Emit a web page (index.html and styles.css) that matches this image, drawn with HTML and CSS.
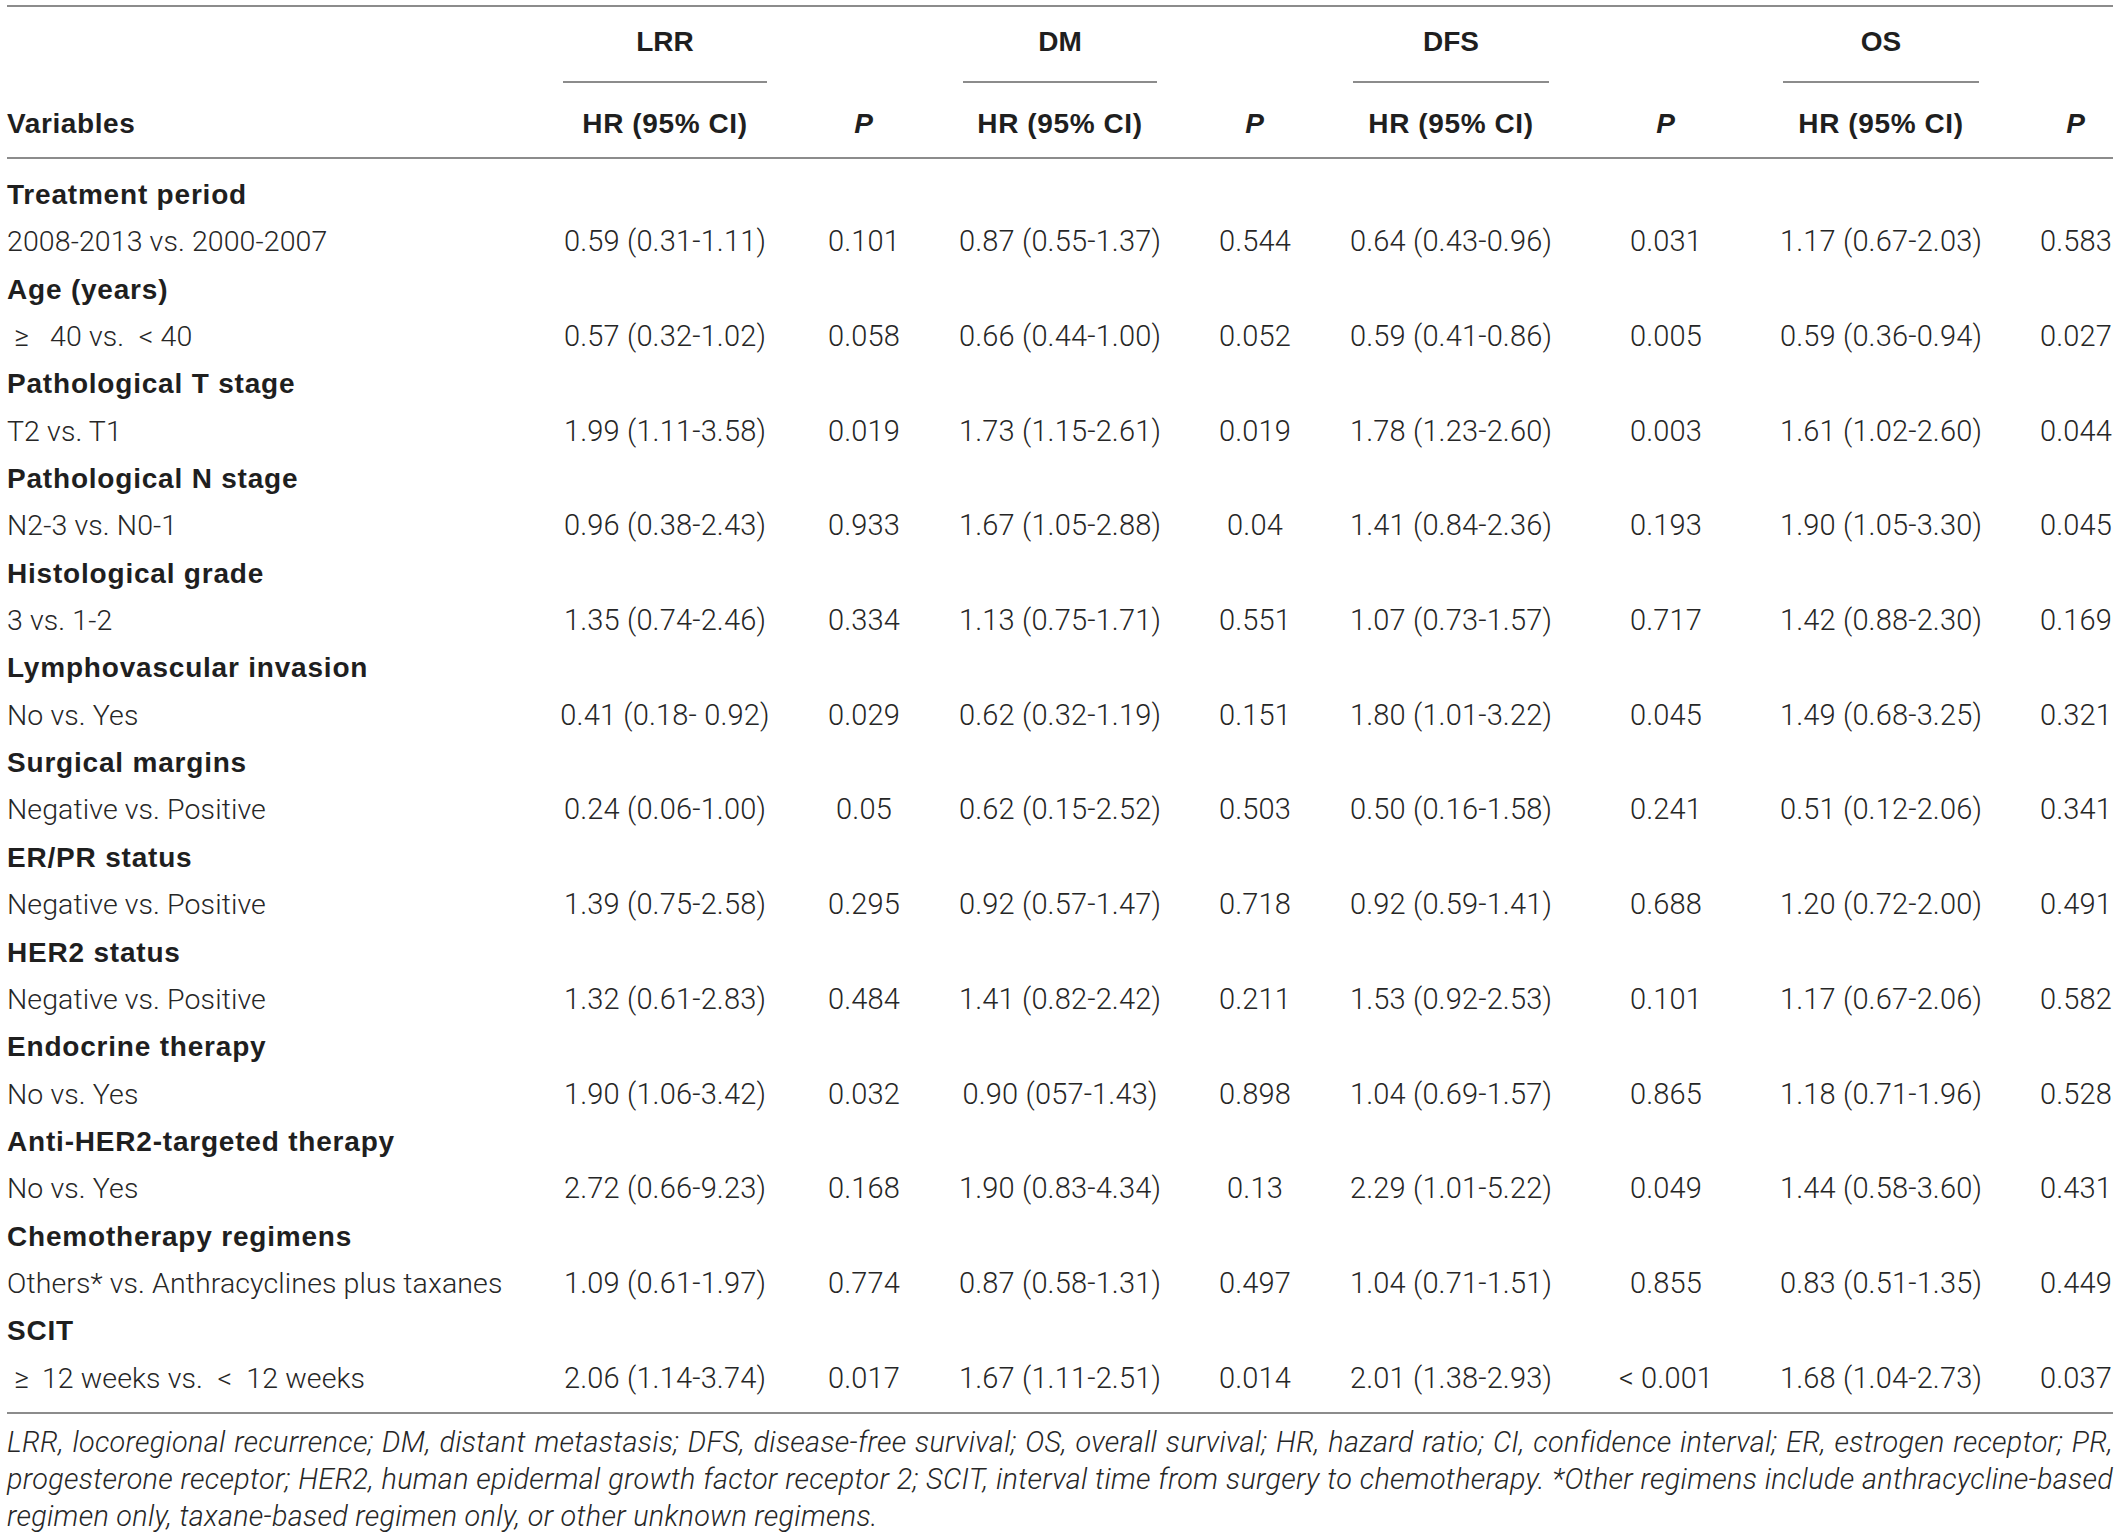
FILE: index.html
```html
<!DOCTYPE html>
<html lang="en">
<head>
<meta charset="utf-8">
<title>Multivariate analysis</title>
<link rel="stylesheet" href="styles.css">
</head>
<body>
<div class="page">
  <div class="tbl">
    <div class="row grp">
      <div></div>
      <div><div class="glabel first">LRR</div></div>
      <div></div>
      <div><div class="glabel">DM</div></div>
      <div></div>
      <div><div class="glabel">DFS</div></div>
      <div></div>
      <div><div class="glabel">OS</div></div>
      <div></div>
    </div>
    <div class="row head">
      <div class="l">Variables</div>
      <div>HR (95% CI)</div><div><i>P</i></div>
      <div>HR (95% CI)</div><div><i>P</i></div>
      <div>HR (95% CI)</div><div><i>P</i></div>
      <div>HR (95% CI)</div><div><i>P</i></div>
    </div>
    <div class="body">
      <div class="row cat"><div class="l">Treatment period</div></div>
      <div class="row"><div class="l">2008-2013 vs. 2000-2007</div><div>0.59 (0.31-1.11)</div><div>0.101</div><div>0.87 (0.55-1.37)</div><div>0.544</div><div>0.64 (0.43-0.96)</div><div>0.031</div><div>1.17 (0.67-2.03)</div><div>0.583</div></div>

      <div class="row cat"><div class="l">Age (years)</div></div>
      <div class="row"><div class="l">&nbsp;&ge;&nbsp;&nbsp; 40 vs.&ensp;&lt;&nbsp;40</div><div>0.57 (0.32-1.02)</div><div>0.058</div><div>0.66 (0.44-1.00)</div><div>0.052</div><div>0.59 (0.41-0.86)</div><div>0.005</div><div>0.59 (0.36-0.94)</div><div>0.027</div></div>

      <div class="row cat"><div class="l">Pathological T stage</div></div>
      <div class="row"><div class="l">T2 vs. T1</div><div>1.99 (1.11-3.58)</div><div>0.019</div><div>1.73 (1.15-2.61)</div><div>0.019</div><div>1.78 (1.23-2.60)</div><div>0.003</div><div>1.61 (1.02-2.60)</div><div>0.044</div></div>

      <div class="row cat"><div class="l">Pathological N stage</div></div>
      <div class="row"><div class="l">N2-3 vs. N0-1</div><div>0.96 (0.38-2.43)</div><div>0.933</div><div>1.67 (1.05-2.88)</div><div>0.04</div><div>1.41 (0.84-2.36)</div><div>0.193</div><div>1.90 (1.05-3.30)</div><div>0.045</div></div>

      <div class="row cat"><div class="l">Histological grade</div></div>
      <div class="row"><div class="l">3 vs. 1-2</div><div>1.35 (0.74-2.46)</div><div>0.334</div><div>1.13 (0.75-1.71)</div><div>0.551</div><div>1.07 (0.73-1.57)</div><div>0.717</div><div>1.42 (0.88-2.30)</div><div>0.169</div></div>

      <div class="row cat"><div class="l">Lymphovascular invasion</div></div>
      <div class="row"><div class="l">No vs. Yes</div><div>0.41 (0.18- 0.92)</div><div>0.029</div><div>0.62 (0.32-1.19)</div><div>0.151</div><div>1.80 (1.01-3.22)</div><div>0.045</div><div>1.49 (0.68-3.25)</div><div>0.321</div></div>

      <div class="row cat"><div class="l">Surgical margins</div></div>
      <div class="row"><div class="l">Negative vs. Positive</div><div>0.24 (0.06-1.00)</div><div>0.05</div><div>0.62 (0.15-2.52)</div><div>0.503</div><div>0.50 (0.16-1.58)</div><div>0.241</div><div>0.51 (0.12-2.06)</div><div>0.341</div></div>

      <div class="row cat"><div class="l">ER/PR status</div></div>
      <div class="row"><div class="l">Negative vs. Positive</div><div>1.39 (0.75-2.58)</div><div>0.295</div><div>0.92 (0.57-1.47)</div><div>0.718</div><div>0.92 (0.59-1.41)</div><div>0.688</div><div>1.20 (0.72-2.00)</div><div>0.491</div></div>

      <div class="row cat"><div class="l">HER2 status</div></div>
      <div class="row"><div class="l">Negative vs. Positive</div><div>1.32 (0.61-2.83)</div><div>0.484</div><div>1.41 (0.82-2.42)</div><div>0.211</div><div>1.53 (0.92-2.53)</div><div>0.101</div><div>1.17 (0.67-2.06)</div><div>0.582</div></div>

      <div class="row cat"><div class="l">Endocrine therapy</div></div>
      <div class="row"><div class="l">No vs. Yes</div><div>1.90 (1.06-3.42)</div><div>0.032</div><div>0.90 (057-1.43)</div><div>0.898</div><div>1.04 (0.69-1.57)</div><div>0.865</div><div>1.18 (0.71-1.96)</div><div>0.528</div></div>

      <div class="row cat"><div class="l">Anti-HER2-targeted therapy</div></div>
      <div class="row"><div class="l">No vs. Yes</div><div>2.72 (0.66-9.23)</div><div>0.168</div><div>1.90 (0.83-4.34)</div><div>0.13</div><div>2.29 (1.01-5.22)</div><div>0.049</div><div>1.44 (0.58-3.60)</div><div>0.431</div></div>

      <div class="row cat"><div class="l">Chemotherapy regimens</div></div>
      <div class="row"><div class="l">Others* vs. Anthracyclines plus taxanes</div><div>1.09 (0.61-1.97)</div><div>0.774</div><div>0.87 (0.58-1.31)</div><div>0.497</div><div>1.04 (0.71-1.51)</div><div>0.855</div><div>0.83 (0.51-1.35)</div><div>0.449</div></div>

      <div class="row cat"><div class="l">SCIT</div></div>
      <div class="row"><div class="l">&nbsp;&ge;&thinsp; 12 weeks vs.&ensp;&lt;&nbsp; 12 weeks</div><div>2.06 (1.14-3.74)</div><div>0.017</div><div>1.67 (1.11-2.51)</div><div>0.014</div><div>2.01 (1.38-2.93)</div><div>&lt; 0.001</div><div>1.68 (1.04-2.73)</div><div>0.037</div></div>
    </div>
  </div>
  <div class="note">
    <div class="nl just">LRR, locoregional recurrence; DM, distant metastasis; DFS, disease-free survival; OS, overall survival; HR, hazard ratio; CI, confidence interval; ER, estrogen receptor; PR,</div>
    <div class="nl just">progesterone receptor; HER2, human epidermal growth factor receptor 2; SCIT, interval time from surgery to chemotherapy. *Other regimens include anthracycline-based</div>
    <div class="nl">regimen only, taxane-based regimen only, or other unknown regimens.</div>
  </div>
</div>
</body>
</html>
```

FILE: styles.css
```css
html, body {
  margin: 0;
  padding: 0;
  background: #ffffff;
}

.page {
  padding: 5px 6px 0 7px;
  font-family: Roboto, "Liberation Sans", Arial, sans-serif;
  font-weight: 300;
  font-size: 29px;
  letter-spacing: 0.15px;
  color: #262626;
}

.tbl {
  width: 2106px;
  border-top: 2px solid #8c8c8c;
  border-bottom: 2px solid #8c8c8c;
}

.row {
  display: grid;
  grid-template-columns: 498px 320px 78px 314px 76px 316px 114px 316px 74px;
}

.row > div {
  text-align: center;
  white-space: nowrap;
}

.row > .l {
  text-align: left;
}

.body .row > .l {
  font-size: 28.5px;
  letter-spacing: 0.1px;
}

.grp,
.head {
  font-family: "Liberation Sans", Arial, sans-serif;
  font-weight: 700;
  font-size: 28px;
  color: #1f1f1f;
  letter-spacing: 0.6px;
}

.glabel {
  margin: 0 60px;
  padding: 21px 0 25px;
  line-height: 28px;
  border-bottom: 2px solid #8c8c8c;
  text-align: center;
  letter-spacing: 0;
}

.glabel.first {
  margin: 0 58px;
}

.head {
  border-bottom: 2px solid #8c8c8c;
}

.head > div {
  padding: 27px 0 19px;
  line-height: 28px;
}

.head i {
  font-style: italic;
}

.body {
  padding: 11.8px 0 9.84px;
}

.body .row > div {
  height: 47.36px;
  line-height: 47.36px;
}

.body .cat .l {
  grid-column: 1 / -1;
  font-family: "Liberation Sans", Arial, sans-serif;
  font-weight: 700;
  font-size: 28px;
  color: #1f1f1f;
  letter-spacing: 0.8px;
}

.note {
  padding-top: 10px;
  width: 2106px;
  font-style: italic;
  font-size: 28.8px;
  letter-spacing: 0.3px;
  color: #262626;
}

.nl {
  line-height: 37px;
  white-space: nowrap;
}

.nl.just {
  white-space: normal;
  text-align: justify;
  text-align-last: justify;
}
```
